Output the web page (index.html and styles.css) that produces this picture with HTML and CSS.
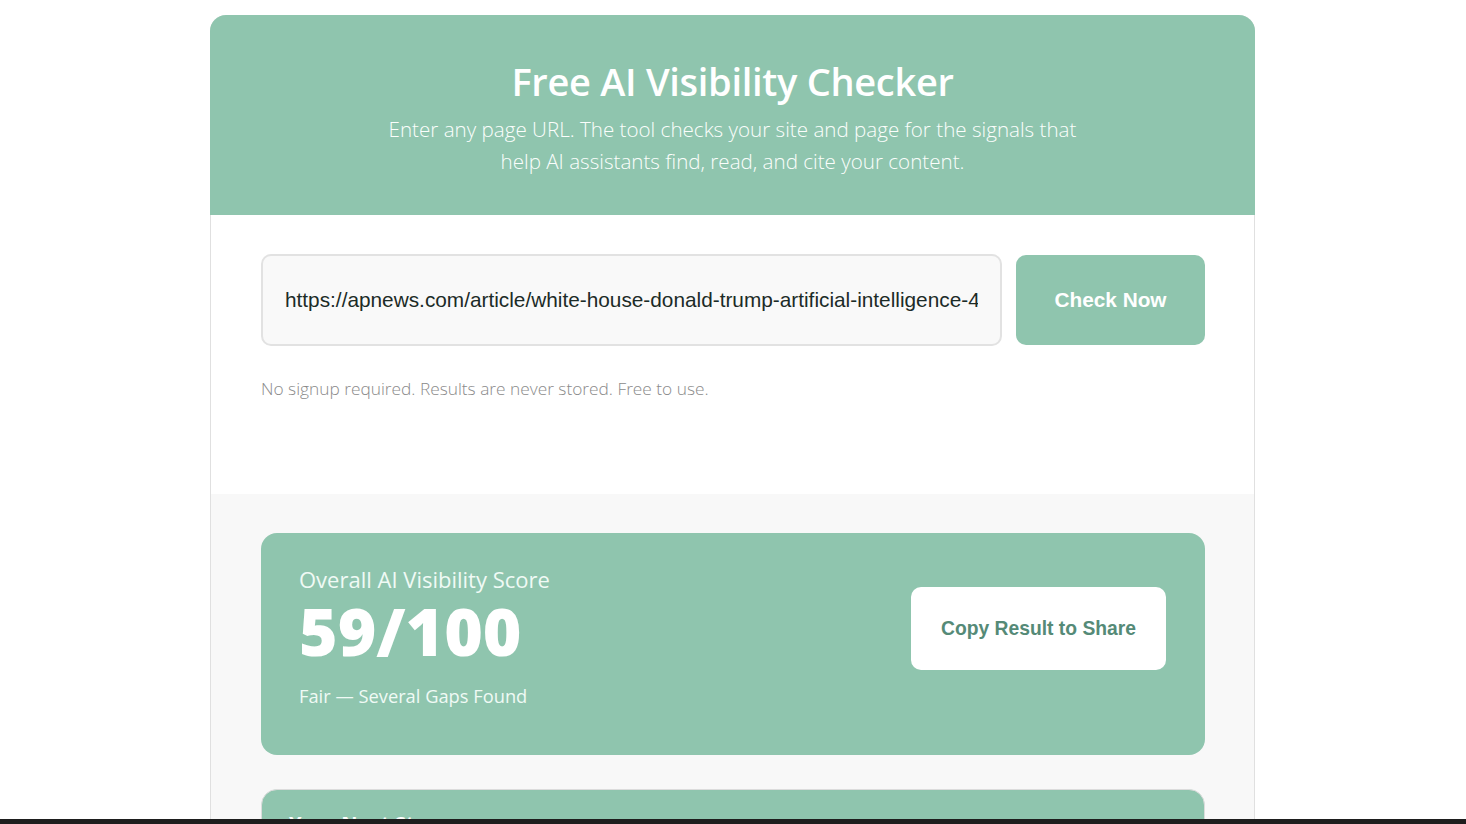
FILE: index.html
```html
<!DOCTYPE html>
<html lang="en">
<head>
<meta charset="utf-8">
<title>Free AI Visibility Checker</title>
<link rel="stylesheet" href="styles.css">
</head>
<body>
<div class="page">
  <div class="card">
    <header class="hero">
      <h1 class="hero-title">Free AI Visibility Checker</h1>
      <p class="hero-sub">Enter any page URL. The tool checks your site and page for the signals that<br>help AI assistants find, read, and cite your content.</p>
    </header>
    <section class="form-section">
      <div class="form-row">
        <input class="url-input" type="text" value="https://apnews.com/article/white-house-donald-trump-artificial-intelligence-4b6f0e1d3a9c">
        <button class="check-btn" type="button">Check Now</button>
      </div>
      <p class="note">No signup required. Results are never stored. Free to use.</p>
    </section>
    <section class="results">
      <div class="score-card">
        <div class="score-info">
          <div class="score-label">Overall AI Visibility Score</div>
          <div class="score-value">59/100</div>
          <div class="score-verdict">Fair — Several Gaps Found</div>
        </div>
        <button class="copy-btn" type="button">Copy Result to Share</button>
      </div>
      <div class="steps-card">
        <h2 class="steps-title">Your Next Steps</h2>
      </div>
    </section>
  </div>
</div>
<div class="bottom-bar"></div>
</body>
</html>
```

FILE: styles.css
```css
* { box-sizing: border-box; }
html, body { margin: 0; padding: 0; background: #ffffff; }
body {
  font-family: "Open Sans", "Noto Sans", sans-serif;
  overflow: hidden;
  height: 824px;
}
.page {
  padding: 15px 1px 0 0;
  display: flex;
  justify-content: center;
}
.card {
  width: 1045px;
  border-radius: 16px 16px 0 0;
  border-left: 1px solid #e0e0e0;
  border-right: 1px solid #e0e0e0;
  background: #ffffff;
}
.hero {
  background: #8fc5ae;
  border-radius: 16px 16px 0 0;
  margin: 0 -1px;
  height: 200px;
  padding-top: 42px;
  text-align: center;
  color: #ffffff;
}
.hero-title {
  margin: 0;
  font-size: 38px;
  font-weight: 600;
  line-height: 48px;
  letter-spacing: -0.3px;
}
.hero-sub {
  margin: 8px 0 0;
  font-size: 20.6px;
  font-weight: 300;
  line-height: 32px;
  color: #fbfefc;
}
.form-section {
  padding: 39px 49px 0 50px;
  height: 279px;
}
.form-row {
  display: flex;
  gap: 14px;
  align-items: center;
}
.url-input {
  flex: 1;
  min-width: 0;
  height: 92px;
  border: 2px solid #e2e2e2;
  border-radius: 10px;
  background: #f9f9f9;
  padding: 0 22px;
  font-family: "Liberation Sans", Arial, sans-serif;
  font-size: 20.8px;
  color: #1c2b27;
  outline: none;
}
.check-btn {
  width: 189px;
  height: 90px;
  border: none;
  border-radius: 10px;
  background: #8fc5ae;
  color: #ffffff;
  font-family: "Liberation Sans", Arial, sans-serif;
  font-size: 20.8px;
  font-weight: 700;
}
.note {
  margin: 31px 0 0;
  font-size: 17.3px;
  font-weight: 300;
  color: #8a8a8a;
}
.results {
  background: #f8f8f8;
  padding: 39px 49px 0 50px;
  height: 340px;
}
.score-card {
  background: #8fc5ae;
  border-radius: 16px;
  height: 222px;
  padding: 33px 39px 0 38px;
  display: flex;
  justify-content: space-between;
  align-items: flex-start;
  color: #ffffff;
}
.score-label {
  font-size: 22px;
  font-weight: 400;
  line-height: 26px;
  color: #f0faf5;
}
.score-value {
  margin-top: 2px;
  font-size: 66px;
  font-weight: 800;
  line-height: 72px;
}
.score-verdict {
  margin-top: 18px;
  font-size: 18.3px;
  line-height: 24px;
  color: #f0faf5;
}
.copy-btn {
  margin-top: 21px;
  width: 255px;
  height: 83px;
  border: none;
  border-radius: 10px;
  background: #ffffff;
  color: #558a77;
  font-family: "Liberation Sans", Arial, sans-serif;
  font-size: 19.3px;
  font-weight: 700;
}
.steps-card {
  margin-top: 34px;
  background: #8fc5ae;
  border: 1px solid #dcdcdc;
  border-radius: 16px;
  height: 200px;
  padding: 20px 27px;
}
.steps-title {
  margin: 0;
  font-size: 20px;
  line-height: 28px;
  font-weight: 700;
  color: #ffffff;
}
.bottom-bar {
  position: fixed;
  left: 0;
  right: 0;
  bottom: 0;
  height: 5px;
  background: #1e1e1e;
}
```
